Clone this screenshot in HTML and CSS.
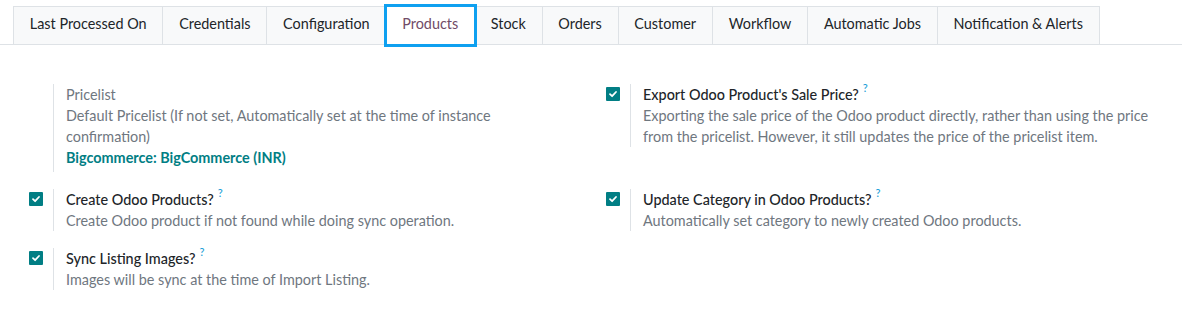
FILE: index.html
```html
<!DOCTYPE html>
<html lang="en">
<head>
    <meta charset="UTF-8">
    <meta name="viewport" content="width=device-width, initial-scale=1.0">
    <title>Bigcommerce – Products</title>
    <link rel="stylesheet" href="styles.css">
</head>
<body>
    <nav class="tabs">
        <a href="#">Last Processed On</a>
        <a href="#">Credentials</a>
        <a href="#">Configuration</a>
        <a href="#" class="active">Products</a>
        <a href="#">Stock</a>
        <a href="#">Orders</a>
        <a href="#">Customer</a>
        <a href="#">Workflow</a>
        <a href="#">Automatic Jobs</a>
        <a href="#">Notification &amp; Alerts</a>
    </nav>

    <div class="settings">
        <div class="setting">
            <div class="left-pane"></div>
            <div class="right-pane">
                <div class="muted">Pricelist</div>
                <div class="muted">Default Pricelist (If not set, Automatically set at the time of instance confirmation)</div>
                <div class="link">Bigcommerce: BigCommerce (INR)</div>
            </div>
        </div>

        <div class="setting">
            <div class="left-pane"><span class="check"><svg viewBox="0 0 14 14" width="14" height="14"><path d="M4 7.2 L6.1 9.2 L10 5" fill="none" stroke="#fff" stroke-width="1.8" stroke-linecap="round" stroke-linejoin="round"/></svg></span></div>
            <div class="right-pane">
                <div class="label">Export Odoo Product's Sale Price?<sup>?</sup></div>
                <div class="muted">Exporting the sale price of the Odoo product directly, rather than using the price from the pricelist. However, it still updates the price of the pricelist item.</div>
            </div>
        </div>

        <div class="setting">
            <div class="left-pane"><span class="check"><svg viewBox="0 0 14 14" width="14" height="14"><path d="M4 7.2 L6.1 9.2 L10 5" fill="none" stroke="#fff" stroke-width="1.8" stroke-linecap="round" stroke-linejoin="round"/></svg></span></div>
            <div class="right-pane">
                <div class="label">Create Odoo Products?<sup>?</sup></div>
                <div class="muted">Create Odoo product if not found while doing sync operation.</div>
            </div>
        </div>

        <div class="setting">
            <div class="left-pane"><span class="check"><svg viewBox="0 0 14 14" width="14" height="14"><path d="M4 7.2 L6.1 9.2 L10 5" fill="none" stroke="#fff" stroke-width="1.8" stroke-linecap="round" stroke-linejoin="round"/></svg></span></div>
            <div class="right-pane">
                <div class="label">Update Category in Odoo Products?<sup>?</sup></div>
                <div class="muted">Automatically set category to newly created Odoo products.</div>
            </div>
        </div>

        <div class="setting">
            <div class="left-pane"><span class="check"><svg viewBox="0 0 14 14" width="14" height="14"><path d="M4 7.2 L6.1 9.2 L10 5" fill="none" stroke="#fff" stroke-width="1.8" stroke-linecap="round" stroke-linejoin="round"/></svg></span></div>
            <div class="right-pane">
                <div class="label">Sync Listing Images?<sup>?</sup></div>
                <div class="muted">Images will be sync at the time of Import Listing.</div>
            </div>
        </div>
    </div>
</body>
</html>
```

FILE: styles.css
```css
body {
    margin: 0;
    background: #fff;
    font-family: Lato, "Open Sans", sans-serif;
    font-size: 14.4px;
    color: #212529;
}
.tabs {
    display: flex;
    margin-top: 6px;
    padding-left: 13px;
    border-bottom: 1px solid #dee2e6;
}
.tabs a {
    display: block;
    height: 34px;
    line-height: 34px;
    padding: 0 15.8px 3px;
    margin-bottom: -1px;
    background: #f8f9fa;
    border: 1px solid #dee2e6;
    border-left: none;
    color: #212529;
    text-decoration: none;
}
.tabs a:first-child {
    border-left: 1px solid #dee2e6;
}
.tabs a.active {
    background: #fff;
    color: #714b67;
    border-top: 1px solid #714b67;
    border-bottom-color: #fff;
    outline: 3px solid #0ea0f0;
    outline-offset: -1px;
    position: relative;
}
.settings {
    display: grid;
    grid-template-columns: 577px 577px;
    row-gap: 17px;
    padding: 39px 0 0 13px;
}
.setting {
    display: flex;
    align-items: flex-start;
    padding-right: 14px;
}
.left-pane {
    width: 40px;
    flex: none;
    padding: 3px 0 0 16px;
    box-sizing: border-box;
}
.check {
    display: block;
    width: 14px;
    height: 14px;
    background: #017e84;
    border-radius: 1px;
}
.check svg {
    display: block;
}
.right-pane {
    border-left: 1px solid #dee2e6;
    padding-left: 12px;
    line-height: 21px;
    flex: 1;
}
.label {
    font-weight: 500;
    color: #212529;
}
.label sup {
    color: #1e9fd8;
    font-size: 11px;
    margin-left: 4px;
    vertical-align: 8px;
    line-height: 0;
}
.muted {
    color: #6f777f;
}
.link {
    color: #017e84;
    font-weight: bold;
    padding-bottom: 4px;
}
```
